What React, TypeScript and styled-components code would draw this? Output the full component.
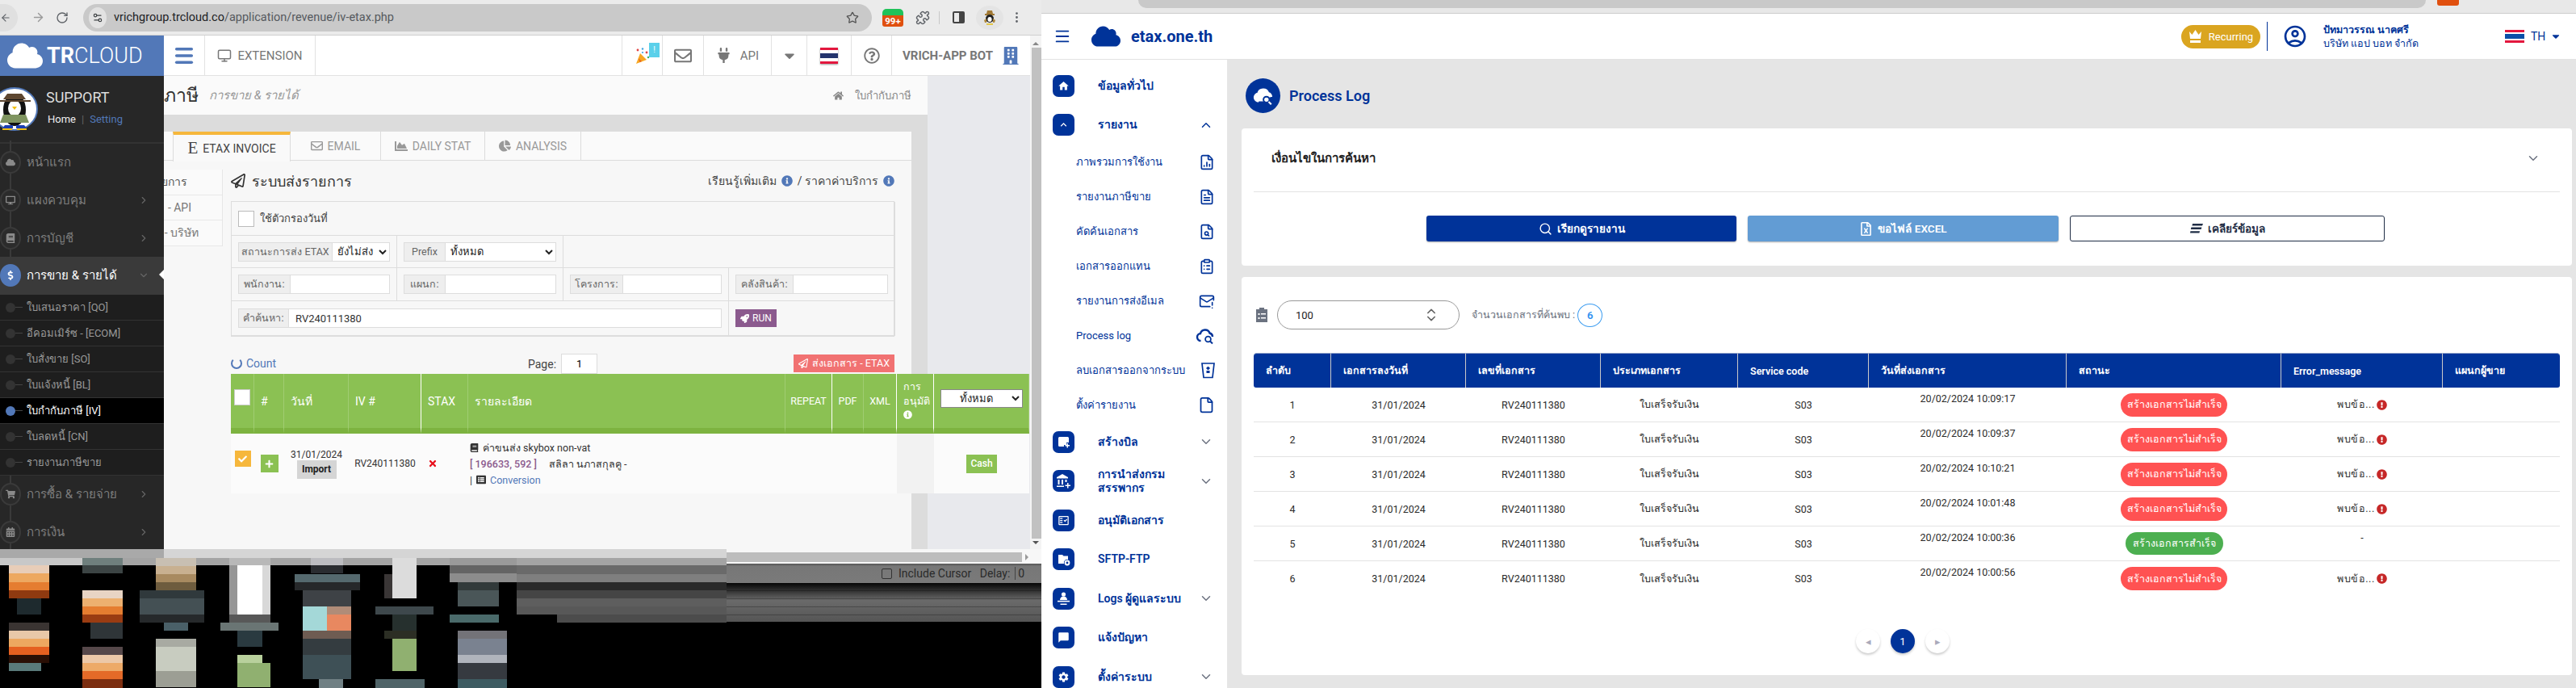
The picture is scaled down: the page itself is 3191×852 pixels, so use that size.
import React from "react";
import styled, { createGlobalStyle } from "styled-components";
import {
  ArrowLeft,
  ArrowRight,
  ChevronDown,
  ChevronRight,
  ChevronUp,
  ChevronsUpDown,
  ClipboardList,
  File,
  FileChartColumn,
  FileSearch,
  FileText,
  MailWarning,
  Menu,
  MoreVertical,
  Monitor,
  Puzzle,
  RotateCw,
  Search,
  Settings2,
  Star,
} from "lucide-react";
import {
  FaBook,
  FaBuilding,
  FaCalendarAlt,
  FaCaretDown,
  FaChartArea,
  FaChartPie,
  FaCheck,
  FaCloud,
  FaDesktop,
  FaDollarSign,
  FaExclamationCircle,
  FaHome,
  FaInfoCircle,
  FaListAlt,
  FaPlug,
  FaPlus,
  FaRegEnvelope,
  FaRegFileExcel,
  FaRegPaperPlane,
  FaRegQuestionCircle,
  FaRocket,
  FaShoppingCart,
  FaTimes,
} from "react-icons/fa";
import {
  MdChatBubble,
  MdHome,
  MdKeyboardArrowUp,
  MdOutlineFactCheck,
  MdOutlineAccountCircle,
  MdSettings,
} from "react-icons/md";

const navy = "#003399";
const trBlue = "#5278b8";

const GlobalStyle = createGlobalStyle`
  html, body { margin: 0; padding: 0; background: #000; }
  body { font-family: "Roboto", "Noto Sans", sans-serif; }
  * { box-sizing: border-box; }
  input, select { font-family: inherit; }
`;

const Screen = styled.div`
  display: flex;
  width: 3191px;
  height: 852px;
  overflow: hidden;
`;

/* ---------- left browser window ---------- */

const LeftWindow = styled.div`
  display: flex;
  flex-direction: column;
  flex: 0 0 1290px;
  height: 852px;
  background: #000;
`;

const ChromeBar = styled.div`
  display: flex;
  align-items: center;
  flex: 0 0 44px;
  background: #ebebeb;
  border-bottom: 1px solid #cfcfcf;
  color: #5f6368;
`;

const BackBubble = styled.span`
  display: flex;
  align-items: center;
  justify-content: flex-end;
  width: 22px;
  height: 34px;
  padding-right: 8px;
  margin-right: 13px;
  border-radius: 0 17px 17px 0;
  background: #e0e0e0;
`;

const ChromeButton = styled.span`
  display: flex;
  align-items: center;
  justify-content: center;
  width: ${(p) => p.$w ?? 36}px;
  height: 30px;
  color: ${(p) => p.$color ?? "#5f6368"};
`;

const UrlPill = styled.div`
  display: flex;
  align-items: center;
  width: 977px;
  height: 34px;
  margin: 0 13px 0 8px;
  padding: 0 16px 0 7px;
  border-radius: 17px;
  background: #c9c9c9;
  font-size: 14.5px;
  color: #3c4043;
`;

const TuneBubble = styled.span`
  display: flex;
  align-items: center;
  justify-content: center;
  width: 22px;
  height: 26px;
  margin-right: 9px;
  border-radius: 50%;
  background: #e2e2e2;
`;

const UrlHost = styled.span`
  color: #202124;
`;

const UrlPath = styled.span`
  color: #55595e;
`;

const UrlStar = styled.span`
  display: flex;
  margin-left: auto;
  color: #555;
`;

const LineBadge = styled.span`
  display: flex;
  align-items: flex-end;
  justify-content: center;
  width: 26px;
  height: 22px;
  margin-right: 12px;
  border-radius: 5px 5px 3px 3px;
  background: linear-gradient(#1fc25a 0 36%, #e0500f 36%);
  color: #fff;
  font-size: 11.5px;
  font-weight: 700;
  line-height: 14px;
`;

const ChromeDivider = styled.span`
  width: 1px;
  height: 16px;
  margin: 0 14px 0 8px;
  background: #c8c8c8;
`;

const SidePanelGlyph = styled.span`
  width: 15px;
  height: 15px;
  margin: 0 4px 0 2px;
  border: 2px solid #444;
  border-radius: 2px;
  background: linear-gradient(90deg, transparent 55%, #444 55%);
`;

const AvatarBubble = styled.span`
  display: flex;
  align-items: center;
  justify-content: center;
  width: 34px;
  height: 30px;
  margin: 0 8px 0 10px;
  border-radius: 50%;
  background: #e4e4e4;
`;

const PageRow = styled.div`
  display: flex;
  flex: 0 0 636px;
  overflow: hidden;
  background: #e8e9ed;
`;

const LeftNav = styled.nav`
  position: relative;
  z-index: 2;
  flex: 0 0 203px;
  background: #272727;
  overflow: hidden;

  &::before {
    content: "";
    position: absolute;
    left: 12px;
    top: 130px;
    bottom: 0;
    width: 2px;
    background: #3a3a3a;
  }
`;

const LogoBlock = styled.div`
  display: flex;
  align-items: center;
  gap: 5px;
  height: 50px;
  padding-left: 9px;
  background: ${trBlue};
  color: #fff;
`;

const LogoWord = styled.span`
  font-size: 27px;
  line-height: 32px;
  white-space: nowrap;
`;

const LogoStrong = styled.b`
  font-weight: 700;
`;

const LogoThin = styled.span`
  font-weight: 300;
`;

const ProfileBlock = styled.div`
  display: flex;
  align-items: center;
  height: 84px;
  gap: 10px;
  border-bottom: 2px solid #333;
`;

const ProfileText = styled.div`
  display: flex;
  flex-direction: column;
  gap: 9px;
  margin-top: -4px;
  color: #ddd;
`;

const ProfileName = styled.div`
  font-size: 18px;
  line-height: 20px;
`;

const ProfileLinks = styled.div`
  display: flex;
  gap: 7px;
  padding-left: 2px;
  font-size: 13px;
  color: #eee;
`;

const LinkBar = styled.span`
  color: #666;
`;

const LinkBlue = styled.span`
  color: ${trBlue};
`;

const NavItem = styled.div`
  position: relative;
  display: flex;
  align-items: center;
  height: 46.7px;
  padding-right: 18px;
  background: ${(p) => (p.$active ? "#3a3a3a" : "transparent")};
  color: ${(p) => (p.$active ? "#fff" : "#7d7d7d")};
  font-size: 15px;

  ${(p) =>
    p.$active &&
    `&::after {
      content: "";
      position: absolute;
      right: 0;
      top: 16px;
      border: 6px solid transparent;
      border-right-color: #fff;
      border-left: 0;
    }`}
`;

const NavCircle = styled.span`
  position: relative;
  z-index: 1;
  display: flex;
  align-items: center;
  justify-content: center;
  flex: 0 0 26px;
  height: 28px;
  margin-right: 7px;
  border-radius: 50%;
  border: 2px solid ${(p) => (p.$active ? trBlue : "#3a3a3a")};
  background: ${(p) => (p.$active ? trBlue : "#2b2b2b")};
  color: ${(p) => (p.$active ? "#fff" : "#8a8a8a")};
  font-size: 12px;
`;

const NavArrow = styled.span`
  display: flex;
  margin-left: auto;
  color: #666;
`;

const SubItem = styled.div`
  position: relative;
  display: flex;
  align-items: center;
  height: 32px;
  padding-left: 33px;
  background: ${(p) => (p.$active ? "#000" : "#1e1e1e")};
  border-bottom: 1px solid #333;
  color: ${(p) => (p.$active ? "#fff" : "#999")};
  font-size: 13px;

  &::before {
    content: "";
    position: absolute;
    left: 7px;
    top: 10px;
    width: 12px;
    height: 12px;
    border-radius: 50%;
    background: ${(p) => (p.$active ? trBlue : "#333")};
  }

  &::after {
    content: "";
    position: absolute;
    left: 19px;
    top: 15px;
    width: 9px;
    height: 1px;
    background: #444;
  }
`;

const PageArea = styled.div`
  display: flex;
  flex-direction: column;
  flex: 0 0 1073px;
  min-width: 0;
`;

const TopBar = styled.header`
  display: flex;
  flex: 0 0 50px;
  background: #fff;
  border-bottom: 1px solid #e2e2e2;
`;

const TopCell = styled.div`
  display: flex;
  align-items: center;
  justify-content: center;
  gap: ${(p) => p.$gap ?? 0}px;
  position: relative;
  flex: ${(p) => (p.$w ? `0 0 ${p.$w}px` : "1")};
  border-right: ${(p) => (p.$plain ? "0" : "1px solid #e2e2e2")};
  color: ${(p) => p.$color ?? "#777"};
  font-size: ${(p) => p.$size ?? 15}px;
  font-weight: ${(p) => p.$weight ?? 400};
`;

const NoticeFlag = styled.span`
  position: absolute;
  right: 3px;
  top: 9px;
  width: 13px;
  height: 18px;
  background: #5bd0ea;
  color: #fff;
  font-size: 10px;
  line-height: 18px;
  text-align: center;
`;

const TitleBand = styled.div`
  display: flex;
  align-items: center;
  flex: 0 0 48px;
  padding-right: 20px;
  background: #fafafa;
  width: 946px;
`;

const TitleClip = styled.div`
  display: flex;
  justify-content: flex-end;
  width: 43px;
  overflow: hidden;
  white-space: nowrap;
  font-size: 23px;
  color: #333;
`;

const TitleSub = styled.span`
  margin-left: 13px;
  font-size: 15px;
  font-style: italic;
  color: #999;
`;

const Crumbs = styled.div`
  display: flex;
  align-items: center;
  gap: 14px;
  margin-left: auto;
  font-size: 13px;
  color: #888;
`;

const Sheet = styled.div`
  flex: 1;
  width: 946px;
  padding: 21px 20px 0 0;
  background: #dcdcdc;
  min-height: 0;
`;

const Panel = styled.div`
  width: 926px;
  height: 100%;
  border-radius: 0 4px 0 0;
  background: #f7f7f7;
`;

const TabRow = styled.div`
  display: flex;
  height: 36px;
  padding-left: 11px;
  background: #fafafa;
  border-bottom: 1px solid #dcdcdc;
`;

const Tab = styled.div`
  display: flex;
  align-items: center;
  justify-content: center;
  gap: 6px;
  width: ${(p) => p.$w}px;
  height: ${(p) => (p.$active ? 37 : 35)}px;
  border-right: 1px solid #dcdcdc;
  border-left: ${(p) => (p.$active ? "1px solid #dcdcdc" : "0")};
  border-top: ${(p) => (p.$active ? "4px solid #f6b73c" : "0")};
  background: ${(p) => (p.$active ? "#f9f9f9" : "transparent")};
  color: ${(p) => (p.$active ? "#444" : "#999")};
  font-size: 14px;
`;

const SerifE = styled.span`
  font-family: "Liberation Serif", serif;
  font-size: 21px;
  color: #444;
`;

const PanelBody = styled.div`
  display: flex;
`;

const SubTabs = styled.div`
  flex: 0 0 73px;
  min-width: 0;
  margin-top: 11px;
  height: 95px;
  overflow: hidden;
  background: #fafafa;
  border-right: 1px solid #e6e6e6;
`;

const SubTab = styled.div`
  display: flex;
  align-items: center;
  justify-content: flex-end;
  height: 31.6px;
  width: 72px;
  padding-right: ${(p) => p.$right}px;
  overflow: hidden;
  white-space: nowrap;
  border-bottom: 1px solid #e8e8e8;
  color: ${(p) => (p.$strong ? "#555" : "#777")};
  font-size: 14px;
`;

const PanelMain = styled.div`
  flex: 1;
  min-width: 0;
  padding: 0 21px 0 10px;
`;

const PanelHeading = styled.div`
  display: flex;
  align-items: center;
  height: 50px;
  gap: 8px;
  color: #333;
  font-size: 18px;
`;

const HeadingRight = styled.div`
  display: flex;
  align-items: center;
  gap: 6px;
  margin-left: auto;
  font-size: 14px;
  color: #444;
`;

const FilterGrid = styled.div`
  display: grid;
  grid-template-columns: 205px 206px 205px 206px;
  grid-template-rows: 42px 40px 41px 43px;
  border: 1px solid #ddd;
`;

const FilterCell = styled.div`
  grid-column: span ${(p) => p.$span ?? 1};
  display: flex;
  align-items: center;
  padding: 0 8px;
  border-right: 1px solid #ddd;
  border-bottom: 1px solid #ddd;
  font-size: 13px;
  color: #444;
`;

const CheckBox = styled.span`
  flex: 0 0 20px;
  height: 20px;
  margin-right: 7px;
  border: 1px solid #bbb;
  background: #fff;
`;

const InputGroup = styled.div`
  display: flex;
  width: 100%;
  height: 24px;
`;

const Addon = styled.span`
  display: flex;
  align-items: center;
  justify-content: center;
  flex: 0 0 ${(p) => p.$w}px;
  background: #eee;
  border: 1px solid #ddd;
  color: #666;
  font-size: 12.5px;
  white-space: nowrap;
`;

const PlainInput = styled.input`
  flex: 1;
  min-width: 0;
  padding: 0 8px;
  border: 1px solid #ddd;
  border-left: 0;
  background: #fff;
  color: #333;
  font-size: 13px;
  outline: none;
`;

const PlainSelect = styled.select`
  flex: 1;
  min-width: 0;
  padding: 0 0 0 2px;
  border: 1px solid #ddd;
  border-left: 0;
  background: #fff;
  color: #222;
  font-size: 13px;
`;

const RunButton = styled.button`
  display: flex;
  align-items: center;
  gap: 4px;
  height: 22px;
  padding: 0 6px;
  border: 0;
  background: #8b5a8e;
  color: #fff;
  font-family: inherit;
  font-size: 12px;
`;

const CountRow = styled.div`
  display: flex;
  align-items: flex-end;
  height: 25px;
  margin-top: 21px;
`;

const CountLink = styled.div`
  display: flex;
  align-items: center;
  flex: 0 0 368px;
  gap: 5px;
  padding-bottom: 5px;
  color: ${trBlue};
  font-size: 14px;
`;

const CountRing = styled.span`
  width: 14px;
  height: 14px;
  border-radius: 50%;
  border: 2px solid ${trBlue};
  border-top-color: transparent;
`;

const PageLabel = styled.div`
  display: flex;
  align-items: center;
  gap: 6px;
  color: #444;
  font-size: 14px;
`;

const PageInput = styled.input`
  width: 45px;
  height: 25px;
  border: 1px solid #ddd;
  background: #fff;
  text-align: center;
  font-size: 13px;
`;

const SendButton = styled.button`
  display: flex;
  align-items: center;
  gap: 5px;
  height: 22px;
  margin: 0 0 2px auto;
  padding: 0 6px;
  border: 0;
  background: #f17272;
  color: #fff;
  font-family: inherit;
  font-size: 12.5px;
  white-space: nowrap;
`;

const GreenGrid = styled.div`
  display: grid;
  grid-template-columns: 29px 37px 80px 90px 58px 393px 58px 39px 41px 46px 118px;
  width: 989px;
`;

const GreenHead = styled.div`
  display: flex;
  align-items: center;
  justify-content: ${(p) => (p.$center ? "center" : "flex-start")};
  height: 74px;
  padding: 0 ${(p) => p.$pad ?? 8}px;
  border-bottom: 7px solid #7db340;
  border-right: 1px solid ${(p) => (p.$white ? "#fff" : "#a0cd72")};
  background: #8bc153;
  color: #fff;
  font-size: ${(p) => p.$size ?? 14}px;
`;

const HeadStack = styled.div`
  line-height: 18px;
  font-size: 12.5px;
`;

const HeadCheck = styled.span`
  width: 20px;
  height: 20px;
  margin-top: -10px;
  border: 1px solid #ccc;
  background: #fff;
`;

const HeadSelect = styled.select`
  width: 102px;
  height: 23px;
  margin-top: -6px;
  border: 1px solid #888;
  background: #fff;
  color: #222;
  text-align: center;
  font-size: 13px;
`;

const GreenCell = styled.div`
  display: flex;
  flex-direction: ${(p) => (p.$stack ? "column" : "row")};
  align-items: center;
  justify-content: ${(p) => (p.$start ? "flex-start" : "center")};
  height: 74px;
  background: ${(p) => (p.$muted ? "#f2f2f2" : "#fbfbfb")};
  color: #333;
  font-size: 12px;
`;

const CrossMark = styled(FaTimes)`
  margin-left: 8px;
  color: #e8101c;
`;

const OrangeCheck = styled.span`
  display: flex;
  align-items: center;
  justify-content: center;
  width: 20px;
  height: 20px;
  margin-top: -12px;
  background: #f6b73c;
  color: #fff;
  font-size: 11px;
`;

const GreenPlus = styled.span`
  display: flex;
  align-items: center;
  justify-content: center;
  width: 22px;
  height: 22px;
  background: #8bc153;
  color: #fff;
  font-size: 11px;
`;

const ImportTag = styled.span`
  display: flex;
  align-items: center;
  justify-content: center;
  width: 49px;
  height: 23px;
  background: #d5d5d5;
  color: #222;
  font-size: 12px;
  font-weight: 700;
`;

const DetailLines = styled.div`
  display: flex;
  flex-direction: column;
  gap: 5px;
  padding-left: 2px;
  font-size: 12.5px;
  line-height: 15px;
`;

const DetailLine = styled.div`
  display: flex;
  align-items: center;
  gap: 5px;
`;

const PurpleCode = styled.span`
  margin-right: 10px;
  color: #8b5a8e;
  font-weight: 500;
`;

const BlueText = styled.span`
  color: ${trBlue};
`;

const CashTag = styled.span`
  display: flex;
  align-items: center;
  justify-content: center;
  width: 38px;
  height: 23px;
  background: #8bc153;
  color: #fff;
  font-size: 12px;
  font-weight: 500;
`;

const PageScrollbar = styled.div`
  display: flex;
  flex-direction: column;
  align-items: center;
  justify-content: space-between;
  flex: 0 0 14px;
  padding: 4px 0 2px;
  background: #f4f4f4;
  color: #666;
`;

const ScrollThumb = styled.span`
  flex: 1;
  width: 100%;
  margin: 3px 2px 3px 6px;
  background: #c1c1c1;
`;

const ScrollArrow = styled.span`
  border: 4px solid transparent;
  border-bottom-color: ${(p) => (p.$down ? "transparent" : "#888")};
  border-top-color: ${(p) => (p.$down ? "#555" : "transparent")};
`;

const DesktopStrip = styled.div`
  display: flex;
  flex: 0 0 172px;
`;

const MosaicSvg = styled.svg`
  flex: 0 0 900px;
`;

const DesktopTail = styled.div`
  display: flex;
  flex-direction: column;
  flex: 0 0 390px;
  background: #000;
`;

const HScrollTrack = styled.div`
  display: flex;
  align-items: center;
  flex: 0 0 18px;
  padding: 4px 16px 2px 0;
  background: #f7f7f7;
  color: #777;
`;

const HScrollThumb = styled.span`
  flex: 1;
  height: 12px;
  margin-right: 4px;
  background: #bdbdbd;
`;

const HScrollArrow = styled.span`
  border: 4px solid transparent;
  border-left-color: #999;
  border-right: 0;
`;

const CaptureBar = styled.div`
  display: flex;
  align-items: center;
  flex: 0 0 24px;
  padding-left: 192px;
  background: linear-gradient(#555 0, #777 14%, #7a7a7a 100%);
  color: #2a2a2a;
  font-size: 14px;
  white-space: nowrap;
  overflow: hidden;
`;

const CaptureCheck = styled.span`
  flex: 0 0 13px;
  height: 13px;
  margin-right: 8px;
  border: 1px solid #333;
  border-radius: 2px;
`;

const CaptureValue = styled.span`
  margin-left: 6px;
  padding: 0 3px;
  border-left: 1px solid #444;
`;

const FadeStripes = styled.div`
  flex: 0 0 48px;
  background:
    repeating-linear-gradient(#0000 0 9px, #0004 9px 10px),
    linear-gradient(#060606 0, #6a6a6a 45%, #555 100%);
`;

/* ---------- right browser window ---------- */

const RightWindow = styled.div`
  display: flex;
  flex-direction: column;
  flex: 0 0 1901px;
  height: 852px;
  background: #e5e5e5;
`;

const RightStrip = styled.div`
  display: flex;
  flex: 0 0 17px;
  padding-left: 120px;
  background: #e8e8e8;
  border-bottom: 1px solid #ccc;
`;

const StripPill = styled.span`
  width: 1595px;
  height: 10px;
  border-radius: 0 0 14px 14px;
  background: #c9c9c9;
`;

const StripBadge = styled.span`
  width: 27px;
  height: 7px;
  margin-left: 14px;
  border-radius: 0 0 3px 3px;
  background: #e0500f;
`;

const RightHeader = styled.header`
  display: flex;
  align-items: center;
  flex: 0 0 57px;
  padding-left: 15px;
  background: #fff;
  border-bottom: 1px solid #e2e2e2;
  color: ${navy};
`;

const BrandName = styled.span`
  margin-left: 13px;
  font-size: 20px;
  font-weight: 700;
  color: ${navy};
`;

const CloudMark = styled.span`
  display: flex;
  margin-left: 25px;
`;

const RecurringPill = styled.div`
  display: flex;
  align-items: center;
  justify-content: center;
  gap: 8px;
  width: 98px;
  height: 29px;
  margin-left: auto;
  border-radius: 15px;
  background: #daa520;
  color: #fff;
  font-size: 13px;
`;

const HeaderDivider = styled.span`
  width: 1px;
  height: 36px;
  margin: 0 18px 0 8px;
  background: ${navy};
`;

const UserText = styled.div`
  width: 225px;
  margin-left: 19px;
  font-size: 12.5px;
  line-height: 17px;
  color: ${navy};
`;

const UserName = styled.div`
  font-weight: 600;
`;

const FlagMark = styled.span`
  display: flex;
  flex-direction: column;
  width: ${(p) => p.$w}px;
  height: ${(p) => p.$h}px;
  box-shadow: ${(p) => (p.$shadow ? "0 1px 2px #0006" : "none")};
  background: linear-gradient(
    #e3173e 0 16%,
    #fff 16% 33%,
    ${(p) => p.$blue} 33% 67%,
    #fff 67% 84%,
    #e3173e 84% 100%
  );
`;

const LangLabel = styled.span`
  display: flex;
  align-items: center;
  gap: 6px;
  width: 64px;
  padding-left: 8px;
  color: ${navy};
  font-size: 14px;
`;

const RightBody = styled.div`
  display: flex;
  flex: 1;
  min-height: 0;
`;

const SideNav = styled.nav`
  flex: 0 0 230px;
  padding: 8px 0 0 14px;
  background: #fff;
  overflow: hidden;
`;

const SideMain = styled.div`
  display: flex;
  align-items: center;
  height: 48.5px;
  color: ${navy};
  font-size: 14px;
  font-weight: 600;
  line-height: 17px;
`;

const SideTile = styled.span`
  display: flex;
  align-items: center;
  justify-content: center;
  flex: 0 0 27px;
  height: 27px;
  margin-right: 29px;
  border-radius: 7px;
  background: ${navy};
  color: #fff;
  font-size: 15px;
`;

const SideChevron = styled.span`
  display: flex;
  margin: 0 17px 0 auto;
  color: ${(p) => (p.$up ? navy : "#6c7280")};
`;

const SideSub = styled.div`
  display: flex;
  align-items: center;
  height: 43px;
  padding: 0 15px 0 29px;
  color: ${navy};
  font-size: 13px;
`;

const SideSubIcon = styled.span`
  display: flex;
  margin-left: auto;
`;

const MainArea = styled.main`
  flex: 1;
  min-width: 0;
  padding: 23px 5px 0 18px;
`;

const TitleRow = styled.div`
  display: flex;
  align-items: center;
  height: 43px;
  padding-left: 5px;
  gap: 11px;
  color: ${navy};
  font-size: 18px;
  font-weight: 600;
`;

const TitleDisc = styled.span`
  display: flex;
  align-items: center;
  justify-content: center;
  width: 43px;
  height: 43px;
  border-radius: 50%;
  background: ${navy};
`;

const FilterCard = styled.section`
  height: 170px;
  margin-top: 19px;
  padding: 0 15px;
  border-radius: 4px;
  background: #fff;
`;

const FilterHead = styled.div`
  display: flex;
  align-items: center;
  justify-content: space-between;
  height: 79px;
  padding: 0 24px 4px 22px;
  border-bottom: 1px solid #e3e3e3;
  color: #222;
  font-size: 15px;
  font-weight: 600;
`;

const ActionRow = styled.div`
  display: flex;
  gap: 14px;
  padding: 29px 0 0 214px;
`;

const ActionButton = styled.button`
  display: flex;
  align-items: center;
  justify-content: center;
  gap: 6px;
  width: ${(p) => p.$w}px;
  height: 32px;
  border: ${(p) => (p.$outline ? "1px solid #1f2d45" : "0")};
  border-radius: 3px;
  background: ${(p) => p.$bg};
  box-shadow: ${(p) => (p.$outline ? "none" : "0 1px 2px #0005")};
  color: ${(p) => (p.$outline ? "#1f2d45" : "#fff")};
  font-family: inherit;
  font-size: 13.5px;
  font-weight: 600;
`;

const ResultCard = styled.section`
  height: 493px;
  margin-top: 14px;
  padding: 29px 15px 0;
  border-radius: 4px;
  background: #fff;
`;

const ResultTop = styled.div`
  display: flex;
  align-items: center;
  height: 36px;
  padding-left: 2px;
  color: #6b7280;
  font-size: 12.5px;
`;

const SizePill = styled.div`
  display: flex;
  align-items: center;
  justify-content: space-between;
  width: 226px;
  height: 36px;
  margin: 0 15px 0 11px;
  padding: 0 24px 0 22px;
  border: 1px solid #999;
  border-radius: 18px;
  color: #222;
  font-size: 13px;
`;

const FoundRing = styled.span`
  display: flex;
  align-items: center;
  justify-content: center;
  width: 31px;
  height: 29px;
  margin-left: 3px;
  border: 1px solid #3c9cf0;
  border-radius: 50%;
  color: #2e90f0;
  font-size: 13px;
  font-weight: 600;
`;

const LogGrid = styled.div`
  display: grid;
  grid-template-columns: 96px 167px 167px 170px 162px 245px 266px 200px 145px;
  margin-top: 29px;
`;

const LogHead = styled.div`
  display: flex;
  align-items: center;
  height: 43px;
  padding-left: 15px;
  border-top: 1px solid #8ea0c8;
  border-right: 1px solid #c9c9c9;
  background: ${navy};
  color: #fff;
  font-size: 12.5px;
  font-weight: 600;

  &:first-child {
    border-top-left-radius: 4px;
    border-bottom-left-radius: 3px;
  }

  &:nth-child(9) {
    border-right: 0;
    border-top-right-radius: 4px;
    border-bottom-right-radius: 3px;
  }
`;

const LogCell = styled.div`
  display: flex;
  align-items: ${(p) => (p.$high ? "flex-start" : "center")};
  justify-content: center;
  height: 43px;
  padding-top: ${(p) => (p.$high ? 6 : 0)}px;
  border-bottom: ${(p) => (p.$last ? "0" : "1px solid #e3e3e3")};
  color: #2b2b2b;
  font-size: 12.5px;
`;

const StatusPill = styled.span`
  display: flex;
  align-items: center;
  justify-content: center;
  width: ${(p) => (p.$ok ? 121 : 132)}px;
  height: ${(p) => (p.$ok ? 28 : 29)}px;
  border-radius: 15px;
  background: ${(p) => (p.$ok ? "#4caf50" : "#ff5252")};
  color: #fff;
  font-size: 12.5px;
  white-space: nowrap;
`;

const ErrorText = styled.span`
  display: flex;
  align-items: center;
  gap: 2px;
  color: #333;
  letter-spacing: 0.5px;
`;

const Pager = styled.div`
  display: flex;
  align-items: center;
  justify-content: center;
  gap: 13px;
  margin-top: 41px;
  padding-right: 10px;
`;

const PagerDot = styled.span`
  display: flex;
  align-items: center;
  justify-content: center;
  width: 30px;
  height: 30px;
  border-radius: 50%;
  background: ${(p) => (p.$active ? navy : "#fff")};
  box-shadow: 0 2px 3px #0003;
  color: ${(p) => (p.$active ? "#fff" : "#aab")};
  font-size: 13px;
`;

/* ---------- drawings ---------- */

const PenguinSvg = styled.svg`
  flex: 0 0 47px;
`;

const Penguin = () => (
  <PenguinSvg width="47" height="54" viewBox="0 0 47 54">
    <ellipse cx="18" cy="27" rx="28" ry="26" fill="#fff" stroke="#5278b8" strokeWidth="2" />
    <ellipse cx="18" cy="28" rx="14" ry="20" fill="#111" />
    <ellipse cx="18" cy="26" rx="8" ry="10" fill="#fff" />
    <path d="M15 24l3 4 3-4z" fill="#f2c013" />
    <path d="M4 34h28l4 10H0z" fill="#7f9460" />
    <path d="M4 15h28l-5-7H9z" fill="#5d4630" />
    <path d="M-2 16h40v2H-2z" fill="#5d4630" />
    <path d="M6 47h10v4H3zM20 47h10l3 4H20z" fill="#1c3fb0" />
    <path d="M3 51h12v2H3zM21 51h12v2H21z" fill="#f2c013" />
  </PenguinSvg>
);

const TinyScout = () => (
  <svg width="16" height="20" viewBox="0 0 16 20">
    <path d="M4 5l1-4h6l1 4z" fill="#a27a35" />
    <rect x="2" y="5" width="12" height="2" fill="#a27a35" />
    <ellipse cx="8" cy="11" rx="5" ry="5" fill="#222" />
    <ellipse cx="8" cy="12" rx="2.600" ry="3" fill="#fff" />
    <path d="M1 13l3-2v5H2zM15 13l-3-2v5h2z" fill="#b08a3c" />
    <path d="M4 17h8v2H4z" fill="#e4c84a" />
  </svg>
);

const CloudSearch = ({ size, color, solid }: { size: number; color: string; solid?: boolean }) => (
  <svg width={size} height={size} viewBox="0 0 24 24" fill="none">
    <path
      d="M6.5 18A4.5 4.5 0 0 1 6 9.03 6 6 0 0 1 17.5 8.5 4.6 4.6 0 0 1 21 13"
      stroke={color}
      strokeWidth="2.4"
      fill={solid ? color : "none"}
    />
    {solid && <path d="M5 18h10v-8H7z" fill={color} />}
    <circle cx="15.5" cy="16" r="3.4" stroke={solid ? navy : color} strokeWidth="1.8" fill="#fff" />
    <path d="M18 18.5l3 3" stroke={solid ? "#fff" : color} strokeWidth="2" />
  </svg>
);

const CupIcon = () => (
  <svg width="17" height="21" viewBox="0 0 17 21" fill="none" stroke={navy} strokeWidth="1.7">
    <path d="M1 2h15l-2 17.5H3z" />
    <path d="M8.500 6v4M6.500 8h4" strokeWidth="2" />
    <rect x="6.500" y="11" width="4" height="3" fill={navy} stroke="none" />
  </svg>
);

const PartyIcon = () => (
  <svg width="18" height="22" viewBox="0 0 18 22">
    <path d="M1 21l5-13 8 8z" fill="#f7a823" />
    <path d="M4 14l4 4-2.500 1z" fill="#e9611f" />
    <circle cx="3" cy="4" r="1.400" fill="#e04545" />
    <circle cx="9" cy="2.500" r="1.200" fill="#3fa5e0" />
    <circle cx="14" cy="7" r="1.400" fill="#e04545" />
    <circle cx="9" cy="7" r="1.100" fill="#3fa5e0" />
    <circle cx="16" cy="13" r="1.200" fill="#43b05c" />
  </svg>
);

const BillAddIcon = () => (
  <svg width="16" height="15" viewBox="0 0 16 15" fill="#fff">
    <path d="M1 2.500A1.500 1.500 0 0 1 2.500 1h10A1.500 1.500 0 0 1 14 2.500V8h-3v3H8v2H2.500A1.500 1.500 0 0 1 1 11.500z" />
    <path d="M11.500 9h1.500v2h2v1.500h-2v2h-1.500v-2h-2V11h2z" />
  </svg>
);

const BankAddIcon = () => (
  <svg width="17" height="18" viewBox="0 0 17 18" fill="#fff">
    <path d="M7 0l7 4v1.500H0V4z" />
    <path d="M1.500 7h2v6h-2zM6 7h2v6H6zM10.500 7h2v3h-2zM0 14.500h9V16H0z" />
    <path d="M13 11h1.500v2.500H17V15h-2.500v2.500H13V15h-2.500v-1.500H13z" />
  </svg>
);

const FolderGearIcon = () => (
  <svg width="16" height="16" viewBox="0 0 16 16" fill="#fff">
    <path d="M1 2h5l1.500 1.500H13V8a4 4 0 0 0-5 5H1z" />
    <circle cx="12" cy="12" r="2.400" fill="none" stroke="#fff" strokeWidth="2" />
  </svg>
);

const PersonBaseIcon = () => (
  <svg width="15" height="17" viewBox="0 0 15 17" fill="#fff">
    <circle cx="7.500" cy="3" r="2.600" />
    <path d="M3 10a4.500 4.500 0 0 1 9 0z" />
    <path d="M0 10.800h15v1.600H0z" />
    <path d="M3.500 14.500h8V16h-8z" />
  </svg>
);

const ClearStackIcon = () => (
  <svg width="16" height="12" viewBox="0 0 16 12" fill="#1f2d45">
    <path d="M3 0h13l-1 2.400H2.400zM1.400 4.600h13l-.8 2.400H.8zM.4 9.200H12l-.6 2.400H0z" />
  </svg>
);

const CrownIcon = () => (
  <svg width="17" height="17" viewBox="0 0 17 17" fill="#fff">
    <path d="M1 2l3.400 4L8.500 0l4 6L16 2l-1 9H2z" />
    <rect x="2" y="13" width="13" height="3" />
  </svg>
);

const ClipboardFilled = () => (
  <svg width="16" height="20" viewBox="0 0 16 20" fill="#6b7280">
    <path d="M5 1h6v2h4v16H1V3h4z" />
    <path d="M3.500 8h2v2h-2zM3.500 13h2v2h-2zM7 8h6v1.500H7zM7 13h6v1.500H7z" fill="#fff" />
  </svg>
);

// pixelated desktop that was blurred out of the capture, coordinates are page coordinates
const mosaicBlocks: [number, number, number, number, string][] = [
  [0, 680, 203, 11, "#a9a9a9"],
  [203, 680, 697, 11, "#d5d5d5"],
  [0, 691, 120, 9, "#c8c8c8"],
  [120, 691, 780, 9, "#a4a4a4"],
  [640, 700, 260, 11, "#6a6a6a"],
  [640, 711, 260, 10, "#7f7f7f"],
  [640, 721, 260, 10, "#2a2a2a"],
  [640, 731, 260, 10, "#454545"],
  [640, 741, 260, 10, "#5e5e5e"],
  [640, 751, 260, 10, "#585858"],
  [690, 761, 210, 10, "#4c4c4c"],

  [11, 700, 50, 10, "#e8cdb8"],
  [11, 710, 50, 11, "#eda860"],
  [11, 721, 50, 10, "#e57d30"],
  [11, 731, 50, 10, "#8f3a10"],
  [21, 741, 30, 20, "#1e2a2e"],
  [11, 771, 50, 10, "#3a3432"],
  [11, 781, 50, 10, "#e8c8a8"],
  [11, 791, 50, 10, "#eda860"],
  [11, 801, 50, 10, "#e56020"],
  [11, 811, 50, 10, "#2a0f05"],
  [11, 821, 40, 10, "#5a7a7a"],

  [102, 691, 50, 9, "#6f7f7d"],
  [102, 700, 50, 10, "#3c4444"],
  [102, 731, 50, 10, "#e8d4c4"],
  [102, 741, 50, 10, "#edb070"],
  [102, 751, 50, 10, "#e57d30"],
  [102, 761, 50, 10, "#9a3c12"],
  [112, 771, 40, 20, "#2f3538"],
  [102, 801, 50, 10, "#56484a"],
  [102, 811, 50, 10, "#ecc8a8"],
  [102, 821, 50, 10, "#edaa68"],
  [102, 831, 50, 10, "#e46a28"],
  [102, 841, 50, 11, "#7c2e10"],

  [193, 691, 50, 10, "#c8bfb2"],
  [193, 701, 50, 10, "#c8b090"],
  [193, 711, 50, 10, "#a88a60"],
  [193, 721, 50, 10, "#6e5c3e"],
  [173, 731, 80, 10, "#30393c"],
  [173, 741, 80, 20, "#445054"],
  [173, 761, 80, 10, "#26292b"],
  [203, 771, 30, 10, "#4a6068"],
  [193, 791, 50, 10, "#a8aaa2"],
  [193, 801, 50, 30, "#c8ccc0"],
  [193, 831, 50, 20, "#9c9e94"],

  [284, 691, 51, 9, "#b8b8b8"],
  [284, 700, 10, 61, "#969696"],
  [294, 700, 31, 61, "#ffffff"],
  [325, 700, 10, 61, "#d8d8d8"],
  [284, 761, 51, 10, "#585858"],
  [273, 771, 72, 10, "#6a7574"],
  [294, 781, 31, 20, "#2a3a40"],
  [294, 811, 31, 10, "#b8d09c"],
  [294, 821, 41, 30, "#90b070"],

  [385, 691, 40, 9, "#bcbcc0"],
  [385, 700, 40, 10, "#2a2c30"],
  [365, 711, 81, 10, "#55696e"],
  [365, 721, 81, 10, "#26282a"],
  [375, 731, 60, 20, "#3e4246"],
  [375, 751, 30, 30, "#a4d8d8"],
  [405, 751, 30, 10, "#b08c78"],
  [405, 761, 30, 20, "#e88860"],
  [375, 781, 60, 10, "#6e5c52"],
  [375, 791, 60, 20, "#343c40"],
  [375, 811, 60, 30, "#3e5056"],
  [395, 841, 30, 11, "#708084"],

  [486, 691, 30, 50, "#dcdcdc"],
  [476, 711, 10, 30, "#3a3636"],
  [465, 751, 72, 10, "#3e484c"],
  [486, 761, 30, 20, "#26302e"],
  [476, 781, 40, 10, "#2c2e24"],
  [486, 791, 30, 40, "#90b070"],
  [465, 841, 61, 11, "#506468"],

  [557, 691, 83, 9, "#9a9a9a"],
  [557, 700, 83, 10, "#646464"],
  [557, 710, 83, 11, "#8c8c8c"],
  [567, 721, 51, 10, "#323a3a"],
  [567, 731, 51, 20, "#4a5658"],
  [557, 761, 61, 10, "#4a6a6a"],
  [567, 781, 61, 10, "#737378"],
  [567, 791, 61, 20, "#7a8290"],
  [567, 811, 61, 10, "#b0b4bc"],
  [567, 821, 61, 20, "#363a40"],
  [567, 841, 61, 11, "#3e5c62"],
];

const DesktopMosaic = () => (
  <MosaicSvg width="900" height="172" viewBox="0 680 900 172" shapeRendering="crispEdges">
    <rect x="0" y="680" width="900" height="172" fill="#000" />
    {mosaicBlocks.map(([x, y, w, h, fill], i) => (
      <rect key={i} x={x} y={y} width={w} height={h} fill={fill} />
    ))}
  </MosaicSvg>
);

/* ---------- data ---------- */

const salesSubs = [
  "ใบเสนอราคา [QO]",
  "อีคอมเมิร์ซ - [ECOM]",
  "ใบสั่งขาย [SO]",
  "ใบแจ้งหนี้ [BL]",
  "ใบกำกับภาษี [IV]",
  "ใบลดหนี้ [CN]",
  "รายงานภาษีขาย",
];

const reportSubs: [string, React.ReactNode][] = [
  ["ภาพรวมการใช้งาน", <FileChartColumn size={20} color={navy} />],
  ["รายงานภาษีขาย", <FileText size={20} color={navy} />],
  ["คัดค้นเอกสาร", <FileSearch size={20} color={navy} />],
  ["เอกสารออกแทน", <ClipboardList size={20} color={navy} />],
  ["รายงานการส่งอีเมล", <MailWarning size={20} color={navy} />],
  ["Process log", <CloudSearch size={24} color={navy} />],
  ["ลบเอกสารออกจากระบบ", <CupIcon />],
  ["ตั้งค่ารายงาน", <File size={21} color={navy} />],
];

const lowerSide: [string, React.ReactNode, boolean][] = [
  ["สร้างบิล", <BillAddIcon />, true],
  ["การนำส่งกรมสรรพากร", <BankAddIcon />, true],
  ["อนุมัติเอกสาร", <MdOutlineFactCheck />, false],
  ["SFTP-FTP", <FolderGearIcon />, false],
  ["Logs ผู้ดูแลระบบ", <PersonBaseIcon />, true],
  ["แจ้งปัญหา", <MdChatBubble />, false],
  ["ตั้งค่าระบบ", <MdSettings />, true],
];

const logRows = [
  ["1", "20/02/2024 10:09:17", false],
  ["2", "20/02/2024 10:09:37", false],
  ["3", "20/02/2024 10:10:21", false],
  ["4", "20/02/2024 10:01:48", false],
  ["5", "20/02/2024 10:00:36", true],
  ["6", "20/02/2024 10:00:56", false],
] as const;

const logHeads = [
  "ลำดับ",
  "เอกสารลงวันที่",
  "เลขที่เอกสาร",
  "ประเภทเอกสาร",
  "Service code",
  "วันที่ส่งเอกสาร",
  "สถานะ",
  "Error_message",
  "แผนกผู้ขาย",
];

export default function App() {
  return (
    <Screen>
      <GlobalStyle />

      <LeftWindow>
        <ChromeBar>
          <BackBubble>
            <ArrowLeft size={16} />
          </BackBubble>
          <ChromeButton $w={24} $color="#9a9a9a">
            <ArrowRight size={17} />
          </ChromeButton>
          <ChromeButton $w={36}>
            <RotateCw size={16} />
          </ChromeButton>
          <UrlPill>
            <TuneBubble>
              <Settings2 size={14} />
            </TuneBubble>
            <UrlHost>vrichgroup.trcloud.co</UrlHost>
            <UrlPath>/application/revenue/iv-etax.php</UrlPath>
            <UrlStar>
              <Star size={16} />
            </UrlStar>
          </UrlPill>
          <LineBadge>99+</LineBadge>
          <ChromeButton $w={24}>
            <Puzzle size={18} />
          </ChromeButton>
          <ChromeDivider />
          <SidePanelGlyph />
          <AvatarBubble>
            <TinyScout />
          </AvatarBubble>
          <MoreVertical size={17} />
        </ChromeBar>

        <PageRow>
          <LeftNav>
            <LogoBlock>
              <FaCloud size={44} />
              <LogoWord>
                <LogoStrong>TR</LogoStrong>
                <LogoThin>CLOUD</LogoThin>
              </LogoWord>
            </LogoBlock>
            <ProfileBlock>
              <Penguin />
              <ProfileText>
                <ProfileName>SUPPORT</ProfileName>
                <ProfileLinks>
                  Home <LinkBar>|</LinkBar> <LinkBlue>Setting</LinkBlue>
                </ProfileLinks>
              </ProfileText>
            </ProfileBlock>
            <NavItem>
              <NavCircle>
                <FaCloud />
              </NavCircle>
              หน้าแรก
            </NavItem>
            <NavItem>
              <NavCircle>
                <FaDesktop />
              </NavCircle>
              แผงควบคุม
              <NavArrow>
                <ChevronRight size={14} />
              </NavArrow>
            </NavItem>
            <NavItem>
              <NavCircle>
                <FaBook />
              </NavCircle>
              การบัญชี
              <NavArrow>
                <ChevronRight size={14} />
              </NavArrow>
            </NavItem>
            <NavItem $active>
              <NavCircle $active>
                <FaDollarSign />
              </NavCircle>
              การขาย & รายได้
              <NavArrow>
                <ChevronDown size={14} />
              </NavArrow>
            </NavItem>
            {salesSubs.map((label) => (
              <SubItem key={label} $active={label.includes("[IV]")}>
                {label}
              </SubItem>
            ))}
            <NavItem>
              <NavCircle>
                <FaShoppingCart />
              </NavCircle>
              การซื้อ & รายจ่าย
              <NavArrow>
                <ChevronRight size={14} />
              </NavArrow>
            </NavItem>
            <NavItem>
              <NavCircle>
                <FaCalendarAlt />
              </NavCircle>
              การเงิน
              <NavArrow>
                <ChevronRight size={14} />
              </NavArrow>
            </NavItem>
          </LeftNav>

          <PageArea>
            <TopBar>
              <TopCell $w={51} $color={trBlue}>
                <Menu size={28} strokeWidth={3} />
              </TopCell>
              <TopCell $w={137} $gap={7}>
                <Monitor size={18} />
                EXTENSION
              </TopCell>
              <TopCell />
              <TopCell $w={50}>
                <PartyIcon />
                <NoticeFlag>!</NoticeFlag>
              </TopCell>
              <TopCell $w={51}>
                <FaRegEnvelope size={22} />
              </TopCell>
              <TopCell $w={84} $gap={11}>
                <FaPlug size={19} />
                API
              </TopCell>
              <TopCell $w={44}>
                <FaCaretDown size={20} />
              </TopCell>
              <TopCell $w={55}>
                <FlagMark $w={22} $h={20} $blue="#23336c" $shadow />
              </TopCell>
              <TopCell $w={50}>
                <FaRegQuestionCircle size={20} />
              </TopCell>
              <TopCell $w={171} $plain $gap={11} $size={15} $weight={700}>
                VRICH-APP BOT
                <FaBuilding size={22} color={trBlue} />
              </TopCell>
            </TopBar>
            <TitleBand>
              <TitleClip>ใบกำกับภาษี</TitleClip>
              <TitleSub>การขาย & รายได้</TitleSub>
              <Crumbs>
                <FaHome size={13} />
                ใบกำกับภาษี
              </Crumbs>
            </TitleBand>
            <Sheet>
              <Panel>
                <TabRow>
                  <Tab $w={146} $active>
                    <SerifE>E</SerifE>
                    ETAX INVOICE
                  </Tab>
                  <Tab $w={112}>
                    <FaRegEnvelope size={15} />
                    EMAIL
                  </Tab>
                  <Tab $w={129}>
                    <FaChartArea size={16} />
                    DAILY STAT
                  </Tab>
                  <Tab $w={119}>
                    <FaChartPie size={15} />
                    ANALYSIS
                  </Tab>
                </TabRow>
                <PanelBody>
                  <SubTabs>
                    <SubTab $strong $right={43}>รายการ</SubTab>
                    <SubTab $right={38}>- API</SubTab>
                    <SubTab $right={29}>- บริษัท</SubTab>
                  </SubTabs>
                  <PanelMain>
                    <PanelHeading>
                      <FaRegPaperPlane size={18} />
                      ระบบส่งรายการ
                      <HeadingRight>
                        เรียนรู้เพิ่มเติม
                        <FaInfoCircle color={trBlue} size={14} />/ ราคาค่าบริการ
                        <FaInfoCircle color={trBlue} size={14} />
                      </HeadingRight>
                    </PanelHeading>
                    <FilterGrid>
                      <FilterCell $span={4}>
                        <CheckBox />
                        ใช้ตัวกรองวันที่
                      </FilterCell>
                      <FilterCell>
                        <InputGroup>
                          <Addon $w={117}>สถานะการส่ง ETAX</Addon>
                          <PlainSelect defaultValue="n">
                            <option value="n">ยังไม่ส่ง</option>
                          </PlainSelect>
                        </InputGroup>
                      </FilterCell>
                      <FilterCell>
                        <InputGroup>
                          <Addon $w={52}>Prefix</Addon>
                          <PlainSelect defaultValue="a">
                            <option value="a">ทั้งหมด</option>
                          </PlainSelect>
                        </InputGroup>
                      </FilterCell>
                      <FilterCell $span={2} />
                      <FilterCell>
                        <InputGroup>
                          <Addon $w={65}>พนักงาน:</Addon>
                          <PlainInput />
                        </InputGroup>
                      </FilterCell>
                      <FilterCell>
                        <InputGroup>
                          <Addon $w={52}>แผนก:</Addon>
                          <PlainInput />
                        </InputGroup>
                      </FilterCell>
                      <FilterCell>
                        <InputGroup>
                          <Addon $w={66}>โครงการ:</Addon>
                          <PlainInput />
                        </InputGroup>
                      </FilterCell>
                      <FilterCell>
                        <InputGroup>
                          <Addon $w={72}>คลังสินค้า:</Addon>
                          <PlainInput />
                        </InputGroup>
                      </FilterCell>
                      <FilterCell $span={3}>
                        <InputGroup>
                          <Addon $w={63}>คำค้นหา:</Addon>
                          <PlainInput defaultValue="RV240111380" />
                        </InputGroup>
                      </FilterCell>
                      <FilterCell>
                        <RunButton>
                          <FaRocket size={11} />
                          RUN
                        </RunButton>
                      </FilterCell>
                    </FilterGrid>
                    <CountRow>
                      <CountLink>
                        <CountRing />
                        Count
                      </CountLink>
                      <PageLabel>
                        Page:
                        <PageInput defaultValue="1" />
                      </PageLabel>
                      <SendButton>
                        <FaRegPaperPlane size={12} />
                        ส่งเอกสาร - ETAX
                      </SendButton>
                    </CountRow>
                    <GreenGrid>
                      <GreenHead $center $pad={0}>
                        <HeadCheck />
                      </GreenHead>
                      <GreenHead>#</GreenHead>
                      <GreenHead>วันที่</GreenHead>
                      <GreenHead $white>IV #</GreenHead>
                      <GreenHead $pad={8}>STAX</GreenHead>
                      <GreenHead>รายละเอียด</GreenHead>
                      <GreenHead $white $center $pad={0} $size={12.5}>
                        REPEAT
                      </GreenHead>
                      <GreenHead $center $pad={0} $size={12.5}>
                        PDF
                      </GreenHead>
                      <GreenHead $white $center $pad={0} $size={12.5}>
                        XML
                      </GreenHead>
                      <GreenHead $white>
                        <HeadStack>
                          การ
                          <br />
                          อนุมัติ
                          <br />
                          <FaInfoCircle size={11} />
                        </HeadStack>
                      </GreenHead>
                      <GreenHead $center $pad={0}>
                        <HeadSelect defaultValue="a">
                          <option value="a">ทั้งหมด</option>
                        </HeadSelect>
                      </GreenHead>

                      <GreenCell>
                        <OrangeCheck>
                          <FaCheck />
                        </OrangeCheck>
                      </GreenCell>
                      <GreenCell>
                        <GreenPlus>
                          <FaPlus />
                        </GreenPlus>
                      </GreenCell>
                      <GreenCell $stack>
                        31/01/2024
                        <ImportTag>Import</ImportTag>
                      </GreenCell>
                      <GreenCell>RV240111380</GreenCell>
                      <GreenCell $start>
                        <CrossMark size={12} />
                      </GreenCell>
                      <GreenCell $start>
                        <DetailLines>
                          <DetailLine>
                            <FaBook size={11} />
                            ค่าขนส่ง skybox non-vat
                          </DetailLine>
                          <DetailLine>
                            <PurpleCode>[ 196633, 592 ]</PurpleCode>
                            สลิลา นภาสกุลคู -
                          </DetailLine>
                          <DetailLine>
                            |
                            <FaListAlt size={12} />
                            <BlueText>Conversion</BlueText>
                          </DetailLine>
                        </DetailLines>
                      </GreenCell>
                      <GreenCell />
                      <GreenCell />
                      <GreenCell />
                      <GreenCell $muted />
                      <GreenCell>
                        <CashTag>Cash</CashTag>
                      </GreenCell>
                    </GreenGrid>
                  </PanelMain>
                </PanelBody>
              </Panel>
            </Sheet>
          </PageArea>

          <PageScrollbar>
            <ScrollArrow />
            <ScrollThumb />
            <ScrollArrow $down />
          </PageScrollbar>
        </PageRow>

        <DesktopStrip>
          <DesktopMosaic />
          <DesktopTail>
            <HScrollTrack>
              <HScrollThumb />
              <HScrollArrow />
            </HScrollTrack>
            <CaptureBar>
              <CaptureCheck />
              Include Cursor&nbsp;&nbsp;&nbsp;Delay:
              <CaptureValue>0</CaptureValue>
            </CaptureBar>
            <FadeStripes />
          </DesktopTail>
        </DesktopStrip>
      </LeftWindow>

      <RightWindow>
        <RightStrip>
          <StripPill />
          <StripBadge />
        </RightStrip>
        <RightHeader>
          <Menu size={22} />
          <CloudMark>
            <FaCloud size={36} color={navy} />
          </CloudMark>
          <BrandName>etax.one.th</BrandName>
          <RecurringPill>
            <CrownIcon />
            Recurring
          </RecurringPill>
          <HeaderDivider />
          <MdOutlineAccountCircle size={32} color={navy} />
          <UserText>
            <UserName>ปัทมาวรรณ นาคศรี</UserName>
            บริษัท แอป บอท จำกัด
          </UserText>
          <FlagMark $w={24} $h={16} $blue="#0a4fa8" />
          <LangLabel>
            TH
            <FaCaretDown size={14} />
          </LangLabel>
        </RightHeader>

        <RightBody>
          <SideNav>
            <SideMain>
              <SideTile>
                <MdHome />
              </SideTile>
              ข้อมูลทั่วไป
            </SideMain>
            <SideMain>
              <SideTile>
                <MdKeyboardArrowUp />
              </SideTile>
              รายงาน
              <SideChevron $up>
                <ChevronUp size={18} />
              </SideChevron>
            </SideMain>
            {reportSubs.map(([label, icon]) => (
              <SideSub key={label}>
                {label}
                <SideSubIcon>{icon}</SideSubIcon>
              </SideSub>
            ))}
            {lowerSide.map(([label, icon, chevron]) => (
              <SideMain key={label}>
                <SideTile>{icon}</SideTile>
                {label === "การนำส่งกรมสรรพากร" ? (
                  <span>
                    การนำส่งกรม
                    <br />
                    สรรพากร
                  </span>
                ) : (
                  label
                )}
                {chevron && (
                  <SideChevron>
                    <ChevronDown size={18} />
                  </SideChevron>
                )}
              </SideMain>
            ))}
          </SideNav>

          <MainArea>
            <TitleRow>
              <TitleDisc>
                <CloudSearch size={26} color="#fff" solid />
              </TitleDisc>
              Process Log
            </TitleRow>
            <FilterCard>
              <FilterHead>
                เงื่อนไขในการค้นหา
                <ChevronDown size={18} color="#6c7280" />
              </FilterHead>
              <ActionRow>
                <ActionButton $w={384} $bg={navy}>
                  <Search size={17} />
                  เรียกดูรายงาน
                </ActionButton>
                <ActionButton $w={385} $bg="#629cd4">
                  <FaRegFileExcel size={17} />
                  ขอไฟล์ EXCEL
                </ActionButton>
                <ActionButton $w={390} $bg="#fff" $outline>
                  <ClearStackIcon />
                  เคลียร์ข้อมูล
                </ActionButton>
              </ActionRow>
            </FilterCard>
            <ResultCard>
              <ResultTop>
                <ClipboardFilled />
                <SizePill>
                  100
                  <ChevronsUpDown size={20} color="#666" />
                </SizePill>
                จำนวนเอกสารที่ค้นพบ :<FoundRing>6</FoundRing>
              </ResultTop>
              <LogGrid>
                {logHeads.map((h) => (
                  <LogHead key={h}>{h}</LogHead>
                ))}
                {logRows.map(([n, sent, ok], i) => {
                  const last = i === logRows.length - 1;
                  return (
                    <React.Fragment key={n}>
                      <LogCell $last={last}>{n}</LogCell>
                      <LogCell $last={last}>31/01/2024</LogCell>
                      <LogCell $last={last}>RV240111380</LogCell>
                      <LogCell $last={last}>ใบเสร็จรับเงิน</LogCell>
                      <LogCell $last={last}>S03</LogCell>
                      <LogCell $last={last} $high>
                        {sent}
                      </LogCell>
                      <LogCell $last={last}>
                        <StatusPill $ok={ok}>{ok ? "สร้างเอกสารสำเร็จ" : "สร้างเอกสารไม่สำเร็จ"}</StatusPill>
                      </LogCell>
                      <LogCell $last={last} $high={ok}>
                        {ok ? (
                          "-"
                        ) : (
                          <ErrorText>
                            พบข้อ...
                            <FaExclamationCircle size={13} color="#c62828" />
                          </ErrorText>
                        )}
                      </LogCell>
                      <LogCell $last={last} />
                    </React.Fragment>
                  );
                })}
              </LogGrid>
              <Pager>
                <PagerDot>◂</PagerDot>
                <PagerDot $active>1</PagerDot>
                <PagerDot>▸</PagerDot>
              </Pager>
            </ResultCard>
          </MainArea>
        </RightBody>
      </RightWindow>
    </Screen>
  );
}
